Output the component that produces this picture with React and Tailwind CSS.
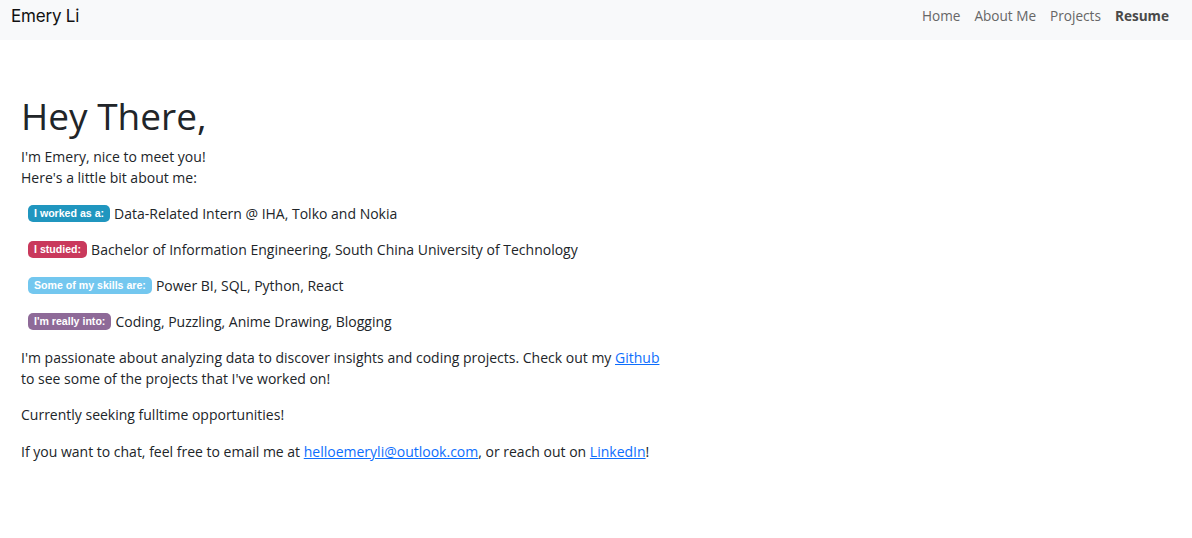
import React from 'react';

const body = { fontFamily: '"Trebuchet MS", "Open Sans", sans-serif' };

const facts = [
  { label: 'I worked as a:', color: 'bg-[#2096bf]', text: 'Data-Related Intern @ IHA, Tolko and Nokia' },
  { label: 'I studied:', color: 'bg-[#c9395c]', text: 'Bachelor of Information Engineering, South China University of Technology' },
  { label: 'Some of my skills are:', color: 'bg-[#73c7ef]', text: 'Power BI, SQL, Python, React' },
  { label: "I'm really into:", color: 'bg-[#8e6a98]', text: 'Coding, Puzzling, Anime Drawing, Blogging' },
];

function Navbar() {
  return (
    <nav className="h-10 bg-[#f8f9fa] flex items-center justify-between px-[11px] pb-[7px]">
      <a className="text-[17px] text-[#111] font-[Inter,sans-serif] tracking-[-0.2px]" href="#">
        Emery Li
      </a>
      <ul className="flex items-center gap-[14px] pr-[12px] text-[13.6px] text-[#666] font-['Open_Sans',sans-serif]">
        <li>Home</li>
        <li>About Me</li>
        <li>Projects</li>
        <li className="font-bold text-[#4a4a4a]">Resume</li>
      </ul>
    </nav>
  );
}

export default function App() {
  return (
    <div className="min-h-screen bg-white text-[#212529]" style={body}>
      <Navbar />
      <main className="px-[21px] pt-[54px] text-[14px] leading-[21px]">
        <h1 className="text-[37px] leading-[44px] mb-[8px]">Hey There,</h1>
        <p>I'm Emery, nice to meet you!</p>
        <p>Here's a little bit about me:</p>
        <div className="mt-[15px] pl-[7px] flex flex-col gap-[15px]">
          {facts.map((f) => (
            <div key={f.label} className="flex items-center gap-[4px]">
              <span
                className={`${f.color} text-white font-bold text-[10.6px] leading-[17px] px-[6px] rounded-[5px] font-['Liberation_Sans',sans-serif]`}
              >
                {f.label}
              </span>
              <span>{f.text}</span>
            </div>
          ))}
        </div>
        <p className="mt-[15px] max-w-[640px]">
          I'm passionate about analyzing data to discover insights and coding projects. Check out my{' '}
          <a href="#" className="text-[#0d6efd] underline">Github</a> to see some of the projects that I've worked on!
        </p>
        <p className="mt-[15px]">Currently seeking fulltime opportunities!</p>
        <p className="mt-[16px]">
          If you want to chat, feel free to email me at{' '}
          <a href="#" className="text-[#0d6efd] underline">helloemeryli@outlook.com</a>, or reach out on{' '}
          <a href="#" className="text-[#0d6efd] underline">LinkedIn</a>!
        </p>
      </main>
    </div>
  );
}
